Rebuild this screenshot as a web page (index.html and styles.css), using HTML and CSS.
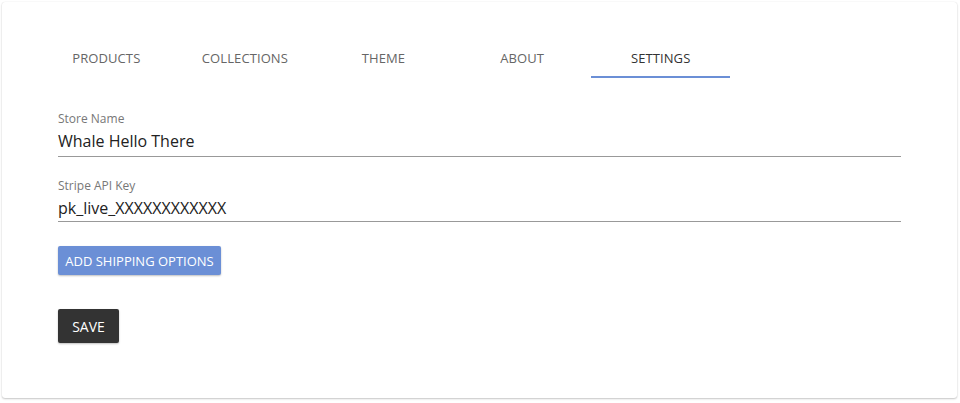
FILE: index.html
```html
<!DOCTYPE html>
<html>
<head>
<meta charset="utf-8">
<link rel="stylesheet" href="styles.css">
</head>
<body>
<div class="card">
  <nav class="tabs">
    <div class="tab">PRODUCTS</div>
    <div class="tab">COLLECTIONS</div>
    <div class="tab">THEME</div>
    <div class="tab">ABOUT</div>
    <div class="tab active">SETTINGS</div>
  </nav>
  <form class="content">
    <div class="field">
      <label class="label">Store Name</label>
      <div class="value">Whale Hello There</div>
    </div>
    <div class="field">
      <label class="label">Stripe API Key</label>
      <div class="value">pk_live_XXXXXXXXXXXX</div>
    </div>
    <div class="btn-row"><span class="btn btn-blue">ADD SHIPPING OPTIONS</span></div>
    <div class="btn-row save-row"><span class="btn btn-dark">SAVE</span></div>
  </form>
</div>
</body>
</html>
```
FILE: styles.css
```css
html, body {
  margin: 0;
  padding: 0;
  background: #ffffff;
}
body {
  padding: 2px 3px 5px 2px;
  font-family: "Open Sans", "Liberation Sans", sans-serif;
}
.card {
  height: 396px;
  box-sizing: border-box;
  background: #fff;
  border-radius: 3px;
  box-shadow: 0 1px 2px rgba(0,0,0,0.22), 0 0 1px rgba(0,0,0,0.12);
  padding-top: 29px;
}
.tabs {
  display: flex;
  padding: 0 35px;
}
.tab {
  width: 138.6px;
  height: 47px;
  box-sizing: border-box;
  display: flex;
  align-items: center;
  justify-content: center;
  font-size: 13px;
  color: #666;
  letter-spacing: 0.1px;
  border-bottom: 2px solid transparent;
  padding-top: 9px;
}
.tab.active {
  color: #333;
  border-bottom-color: #6b8fd6;
}
.content {
  padding: 0 56px;
  display: flex;
  flex-direction: column;
}
.field {
  margin-top: 33px;
  border-bottom: 1px solid #999;
  padding-bottom: 4px;
}
.field + .field {
  margin-top: 21px;
  padding-bottom: 2px;
}
.label {
  display: block;
  font-size: 12px;
  color: #777;
  line-height: 16px;
}
.value {
  font-size: 16px;
  color: #222;
  line-height: 22px;
  margin-top: 3px;
}
.btn-row {
  display: flex;
  margin-top: 24px;
}
.save-row {
  margin-top: 34px;
}
.btn {
  color: #fff;
  border-radius: 2px;
  font-size: 13px;
  display: flex;
  align-items: center;
  justify-content: center;
  box-shadow: 0 1px 2px rgba(0,0,0,0.25);
}
.btn-blue {
  background: #6b8fd6;
  width: 163px;
  height: 29px;
}
.btn-dark {
  background: #333;
  width: 61px;
  height: 34px;
  font-size: 14px;
}
```
